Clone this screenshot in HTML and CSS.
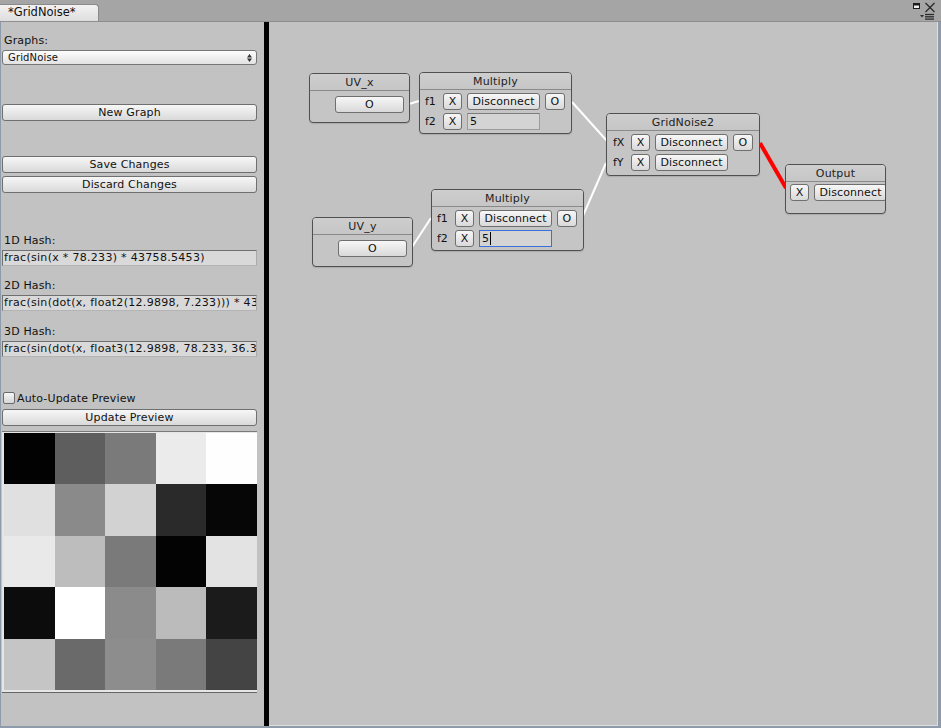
FILE: index.html
```html
<!DOCTYPE html>
<html>
<head>
<meta charset="utf-8">
<title>GridNoise</title>
<link rel="stylesheet" href="styles.css">
</head>
<body>
<div class="window">
  <div class="tabbar">
    <div class="tab">*GridNoise*</div>
    <svg class="win-icons" width="30" height="21" viewBox="0 0 30 21">
      <rect x="3.5" y="3.5" width="6" height="5" fill="#f0f0f0" stroke="#1a1a1a"/>
      <line x1="3" y1="4.5" x2="10" y2="4.5" stroke="#1a1a1a" stroke-width="2"/>
      <line x1="15.5" y1="3" x2="24.5" y2="12" stroke="#2a2a2a" stroke-width="1.3"/>
      <line x1="24.5" y1="3" x2="15.5" y2="12" stroke="#2a2a2a" stroke-width="1.3"/>
      <polygon points="10,15 14,15 12,17.5" fill="#2a2a2a"/>
      <line x1="15" y1="14.5" x2="24" y2="14.5" stroke="#2a2a2a" stroke-width="1.3"/>
      <line x1="15" y1="16.8" x2="24" y2="16.8" stroke="#2a2a2a" stroke-width="1.3"/>
      <line x1="15" y1="19.1" x2="24" y2="19.1" stroke="#2a2a2a" stroke-width="1.3"/>
    </svg>
  </div>
  <div class="main">
    <div class="panel">
      <div class="label first">Graphs:</div>
      <div class="dropdown">
        <span>GridNoise</span>
        <svg width="5" height="8" viewBox="0 0 5 8"><polygon points="0,3.5 5,3.5 2.5,0" fill="#333"/><polygon points="0,4.5 5,4.5 2.5,8" fill="#333"/></svg>
      </div>
      <div class="btn new-graph">New Graph</div>
      <div class="btn save">Save Changes</div>
      <div class="btn discard">Discard Changes</div>
      <div class="label hash1">1D Hash:</div>
      <div class="field">frac(sin(x * 78.233) * 43758.5453)</div>
      <div class="label hash2">2D Hash:</div>
      <div class="field">frac(sin(dot(x, float2(12.9898, 7.233))) * 43758.5453)</div>
      <div class="label hash3">3D Hash:</div>
      <div class="field">frac(sin(dot(x, float3(12.9898, 78.233, 36.34))) * 43758.5453)</div>
      <div class="check-row"><div class="checkbox"></div><span>Auto-Update Preview</span></div>
      <div class="btn update">Update Preview</div>
      <div class="preview">
        <div class="grid">
          <div style="background:#020202"></div>
          <div style="background:#5e5e5e"></div>
          <div style="background:#7a7a7a"></div>
          <div style="background:#ebebeb"></div>
          <div style="background:#fefefe"></div>
          <div style="background:#e0e0e0"></div>
          <div style="background:#8a8a8a"></div>
          <div style="background:#d2d2d2"></div>
          <div style="background:#2a2a2a"></div>
          <div style="background:#060606"></div>
          <div style="background:#e9e9e9"></div>
          <div style="background:#bdbdbd"></div>
          <div style="background:#7a7a7a"></div>
          <div style="background:#030303"></div>
          <div style="background:#e3e3e3"></div>
          <div style="background:#0c0c0c"></div>
          <div style="background:#ffffff"></div>
          <div style="background:#8b8b8b"></div>
          <div style="background:#bbbbbb"></div>
          <div style="background:#1b1b1b"></div>
          <div style="background:#c5c5c5"></div>
          <div style="background:#6a6a6a"></div>
          <div style="background:#8d8d8d"></div>
          <div style="background:#7a7a7a"></div>
          <div style="background:#444444"></div>
        </div>
      </div>
    </div>
    <div class="divider"></div>
    <div class="canvas">
      <svg class="wires" width="668" height="703">
        <line x1="140" y1="82" x2="150" y2="79" stroke="#fff" stroke-width="2"/>
        <line x1="303" y1="80" x2="338" y2="119" stroke="#fff" stroke-width="2"/>
        <line x1="143" y1="225" x2="162" y2="196" stroke="#fff" stroke-width="2"/>
        <line x1="313" y1="196" x2="337" y2="141" stroke="#fff" stroke-width="2"/>
        <line x1="491" y1="121" x2="517" y2="166" stroke="#f00" stroke-width="4"/>
      </svg>

      <div class="node n-uvx">
        <div class="node-title">UV_x</div>
        <div class="uv-body"><div class="nbtn uv-btn">O</div></div>
      </div>

      <div class="node n-mul1">
        <div class="node-title">Multiply</div>
        <div class="node-body">
          <div class="row"><span class="pin">f1</span><div class="nbtn x">X</div><div class="nbtn disc">Disconnect</div><div class="nbtn o">O</div></div>
          <div class="row"><span class="pin">f2</span><div class="nbtn x">X</div><div class="nfield">5</div></div>
        </div>
      </div>

      <div class="node n-gn2">
        <div class="node-title">GridNoise2</div>
        <div class="node-body gn-body">
          <div class="row"><span class="pin">fX</span><div class="nbtn x">X</div><div class="nbtn disc">Disconnect</div><div class="nbtn o">O</div></div>
          <div class="row"><span class="pin">fY</span><div class="nbtn x">X</div><div class="nbtn disc">Disconnect</div></div>
        </div>
      </div>

      <div class="node n-out">
        <div class="node-title">Output</div>
        <div class="out-body"><div class="nbtn x">X</div><div class="nbtn disc">Disconnect</div></div>
      </div>

      <div class="node n-mul2">
        <div class="node-title">Multiply</div>
        <div class="node-body">
          <div class="row"><span class="pin">f1</span><div class="nbtn x">X</div><div class="nbtn disc">Disconnect</div><div class="nbtn o">O</div></div>
          <div class="row"><span class="pin">f2</span><div class="nbtn x">X</div><div class="nfield focused"><span class="caret">5</span></div></div>
        </div>
      </div>

      <div class="node n-uvy">
        <div class="node-title">UV_y</div>
        <div class="uv-body"><div class="nbtn uv-btn">O</div></div>
      </div>
    </div>
  </div>
</div>
</body>
</html>
```
FILE: styles.css
```css
* { box-sizing: border-box; }
body {
  margin: 0;
  font-family: "DejaVu Sans", sans-serif;
  font-size: 11px;
  color: #111;
  background: #c2c2c2;
}
.window {
  width: 941px;
  height: 728px;
  display: flex;
  flex-direction: column;
  overflow: hidden;
}
.tabbar {
  height: 22px;
  flex: none;
  background: #a5a5a5;
  border-bottom: 1px solid #8e8e8e;
  display: flex;
  align-items: flex-end;
}
.tab {
  width: 99px;
  height: 17px;
  background: linear-gradient(#f2f2f2, #dedede);
  border: 1px solid #8a8a8a;
  border-left: none;
  border-bottom: none;
  border-radius: 0 4px 0 0;
  padding-left: 8px;
  font-size: 11.5px;
  line-height: 15px;
  color: #111;
}
.win-icons {
  margin-left: auto;
  align-self: flex-start;
  margin-right: 1px;
}
.main {
  flex: 1;
  display: flex;
  border-left: 1px solid #8d9bab;
  border-right: 3px solid #8d9bab;
  border-bottom: 2px solid #8d9bab;
}
.panel {
  width: 263px;
  flex: none;
  display: flex;
  flex-direction: column;
  padding: 0 7px 0 1px;
  background: #c2c2c2;
  letter-spacing: 0.15px;
}
.divider {
  width: 5px;
  flex: none;
  background: #000;
}
.canvas {
  flex: 1;
  position: relative;
  background: #c2c2c2;
  border-right: 1px solid #dedede;
  border-bottom: 1px solid #dedede;
  overflow: hidden;
}

/* left panel */
.label {
  height: 14px;
  line-height: 14px;
  margin-left: 2px;
}
.label.first { margin-top: 12px; }
.label.hash1 { margin-top: 41px; }
.label.hash2 { margin-top: 13px; }
.label.hash3 { margin-top: 14px; }
.dropdown {
  margin-top: 2px;
  height: 15px;
  border: 1px solid #767676;
  border-radius: 3px;
  background: linear-gradient(#fdfdfd, #e2e2e2);
  font-size: 10px;
  line-height: 13px;
  padding: 0 4px 0 5px;
  display: flex;
  justify-content: space-between;
  align-items: center;
}
.btn {
  height: 17px;
  border: 1px solid #6f6f6f;
  border-radius: 3px;
  background: linear-gradient(#f7f7f7, #d9d9d9);
  text-align: center;
  line-height: 16px;
}
.btn.new-graph { margin-top: 39px; }
.btn.save { margin-top: 35px; }
.btn.discard { margin-top: 3px; }
.btn.update { margin-top: 4px; }
.field {
  margin-top: 2px;
  height: 16px;
  background: #d9d9d9;
  border: 1px solid;
  border-color: #707070 #aaaaaa #b4b4b4 #707070;
  padding-left: 1px;
  line-height: 14px;
  white-space: nowrap;
  overflow: hidden;
  letter-spacing: 0.3px;
}
.check-row {
  margin-top: 34px;
  margin-left: 1px;
  height: 14px;
  display: flex;
  align-items: center;
  gap: 2px;
}
.checkbox {
  width: 12px;
  height: 12px;
  border: 1px solid #6a6a6a;
  border-radius: 2px;
  background: linear-gradient(#f6f6f6, #d6d6d6);
}
.preview {
  margin-top: 5px;
  border-top: 1px solid #7a7a7a;
  border-bottom: 1px solid #666;
  padding: 1px 0 2px 2px;
  background: #e6e6e6;
}
.grid {
  width: 253px;
  height: 257px;
  display: grid;
  grid-template-columns: repeat(5, 1fr);
  grid-template-rows: repeat(5, 1fr);
}

/* canvas */
.wires {
  position: absolute;
  left: 0;
  top: 0;
}
.node {
  position: absolute;
  background: #c5c5c5;
  border: 1px solid #505050;
  border-radius: 4px;
  overflow: hidden;
  box-shadow: 0 1px 1px rgba(0, 0, 0, 0.12);
}
.node-title {
  height: 17px;
  line-height: 17px;
  text-align: center;
  color: #222;
  letter-spacing: 0.2px;
  border-bottom: 1px solid #8a8a8a;
  background: linear-gradient(#cecece, #c6c6c6);
}
.node-body {
  padding: 3px 0 0 5px;
  display: flex;
  flex-direction: column;
  gap: 3px;
}
.gn-body { padding-left: 6px; }
.row {
  display: flex;
  align-items: center;
  gap: 5px;
  height: 17px;
}
.pin { width: 13px; }
.nbtn {
  height: 17px;
  flex: none;
  border: 1px solid #6f6f6f;
  border-radius: 3px;
  background: linear-gradient(#f7f7f7, #d9d9d9);
  text-align: center;
  line-height: 16px;
  letter-spacing: 0.1px;
}
.x { width: 19px; }
.disc { width: 73px; }
.o { width: 20px; }
.nfield {
  width: 73px;
  height: 17px;
  background: #d4d4d4;
  border: 1px solid #9c9c9c;
  border-top-color: #7c7c7c;
  padding-left: 2px;
  line-height: 15px;
}
.nfield.focused {
  border-color: #3b6fd9;
}
.caret {
  border-right: 1px solid #000;
  padding-right: 1px;
}
.uv-body {
  padding: 5px 5px 0 0;
  display: flex;
  justify-content: flex-end;
}
.uv-btn { width: 69px; }
.out-body {
  padding: 2px 0 0 4px;
  display: flex;
  gap: 5px;
}

.n-uvx { left: 40px; top: 51px; width: 101px; height: 50px; }
.n-mul1 { left: 150px; top: 50px; width: 153px; height: 62px; }
.n-gn2 { left: 337px; top: 91px; width: 154px; height: 63px; }
.n-out { left: 516px; top: 142px; width: 101px; height: 50px; }
.n-mul2 { left: 162px; top: 167px; width: 153px; height: 62px; }
.n-uvy { left: 43px; top: 195px; width: 101px; height: 50px; }
```
